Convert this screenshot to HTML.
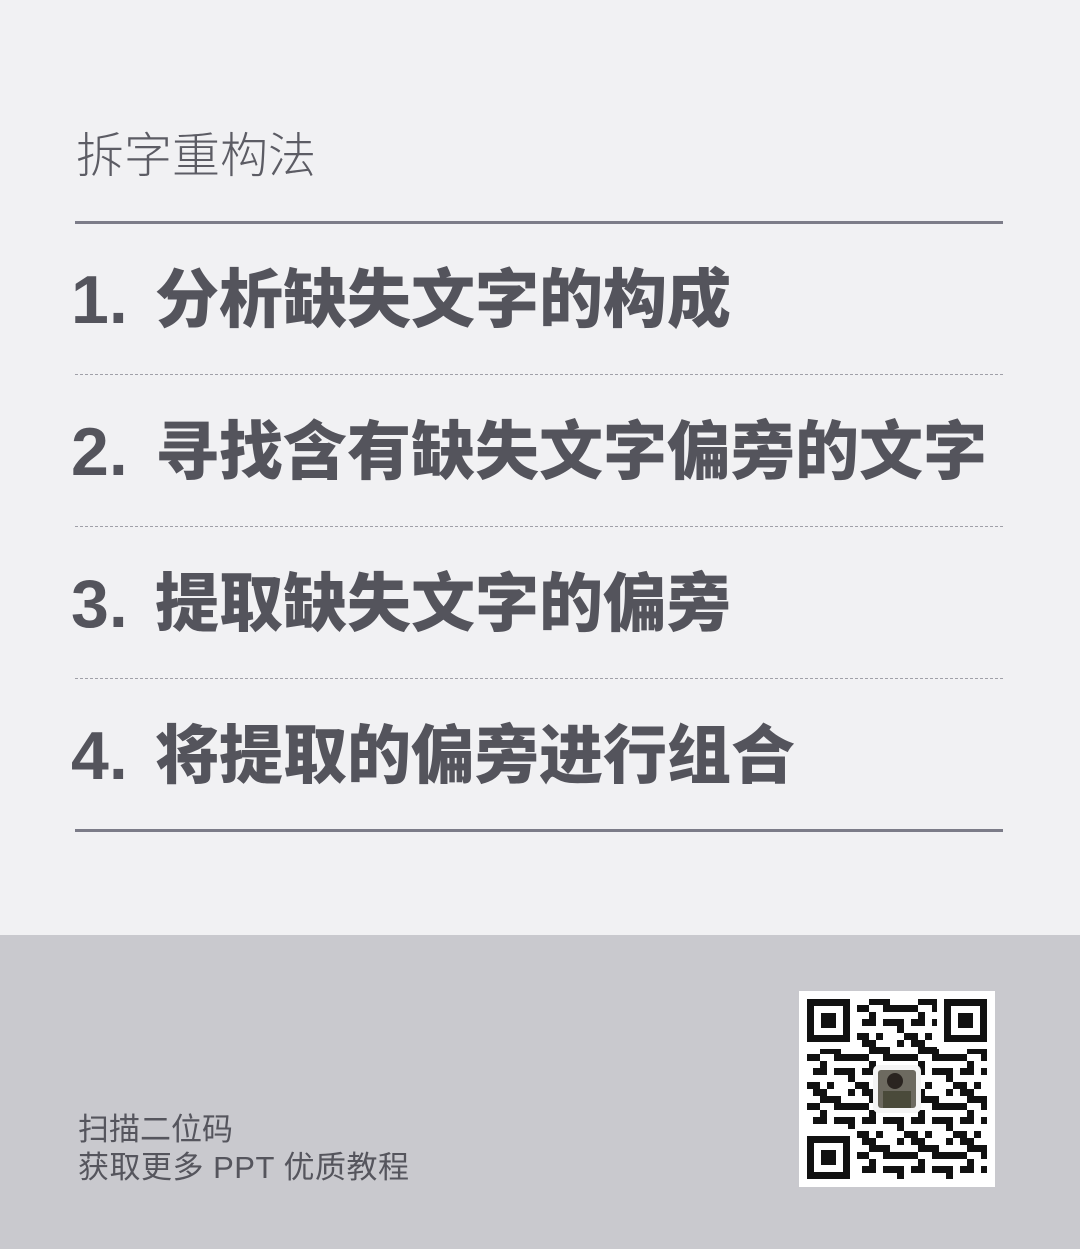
<!DOCTYPE html>
<html><head><meta charset="utf-8"><style>
*{margin:0;padding:0}
body{width:1080px;height:1249px;background:#f1f1f3;position:relative;overflow:hidden;font-family:"Liberation Sans","Noto Sans CJK SC",sans-serif;color:#54545c}
.t{position:absolute;left:76px;top:116px;font-size:48px;font-weight:300;color:#5c5c64;white-space:nowrap}
.ln{position:absolute;left:75px;width:928px;height:3px;background:#7c7c88}
.dl{position:absolute;left:75px;width:928px;border-top:1.5px dashed #a0a0a8}
.n{position:absolute;left:71px;font-size:68px;font-weight:bold;line-height:80px}
.c{position:absolute;left:155px;font-size:64px;font-weight:900;line-height:80px;white-space:nowrap}
.ft{position:absolute;left:0;top:935px;width:1080px;height:314px;background:#c9c9ce}
.f{position:absolute;left:78px;font-size:31px;color:#55555d;white-space:nowrap}
</style></head><body>
<div class="t">拆字重构法</div>
<div class="ln" style="top:221px"></div>
<div class="n" style="top:260px">1.</div><div class="c" style="top:260px">分析缺失文字的构成</div>
<div class="dl" style="top:374px"></div>
<div class="n" style="top:412px">2.</div><div class="c" style="top:412px">寻找含有缺失文字偏旁的文字</div>
<div class="dl" style="top:526px"></div>
<div class="n" style="top:564px">3.</div><div class="c" style="top:564px">提取缺失文字的偏旁</div>
<div class="dl" style="top:678px"></div>
<div class="n" style="top:716px">4.</div><div class="c" style="top:716px">将提取的偏旁进行组合</div>
<div class="ln" style="top:829px"></div>
<div class="ft"></div>
<div class="f" style="top:1104px">扫描二位码</div>
<div class="f" style="top:1142px;letter-spacing:0.5px">获取更多 PPT 优质教程</div>
<svg style="position:absolute;left:799px;top:991px" width="196" height="196" viewBox="0 0 196 196">
<defs><pattern id="p" width="49" height="49" patternUnits="userSpaceOnUse">
<path fill="#111" d="M0 0h7v7H0zM14 0h14v7H14zM35 7h7v14h-7zM7 14h14v7H7zM0 28h7v7H0zM21 21h7v14h-7zM35 28h14v7H35zM7 42h14v7H7zM28 42h7v7h-7zM42 14h7v7h-7zM14 28h7v7h-7zM0 35h7v7H0zM28 7h7v7h-7zM0 14h7v7H0zM21 7h7v7h-7z"/>
</pattern></defs>
<rect width="196" height="196" fill="#fff"/>
<rect x="8" y="8" width="180" height="180" fill="url(#p)"/>
<g fill="#fff"><rect x="8" y="8" width="50" height="50"/><rect x="138" y="8" width="50" height="50"/><rect x="8" y="138" width="50" height="50"/></g>
<g fill="none" stroke="#111" stroke-width="7"><rect x="11.5" y="11.5" width="36" height="36"/><rect x="148.5" y="11.5" width="36" height="36"/><rect x="11.5" y="148.5" width="36" height="36"/></g>
<g fill="#111"><rect x="22" y="22" width="15" height="15"/><rect x="159" y="22" width="15" height="15"/><rect x="22" y="159" width="15" height="15"/></g>
<rect x="74" y="74" width="48" height="48" rx="6" fill="#f4f4f4"/>
<rect x="79" y="79" width="38" height="38" rx="3" fill="#6d6a60"/>
<circle cx="96" cy="90" r="8" fill="#2a2420"/><rect x="84" y="100" width="28" height="17" fill="#4a4a3a"/>
</svg>
</body></html>
